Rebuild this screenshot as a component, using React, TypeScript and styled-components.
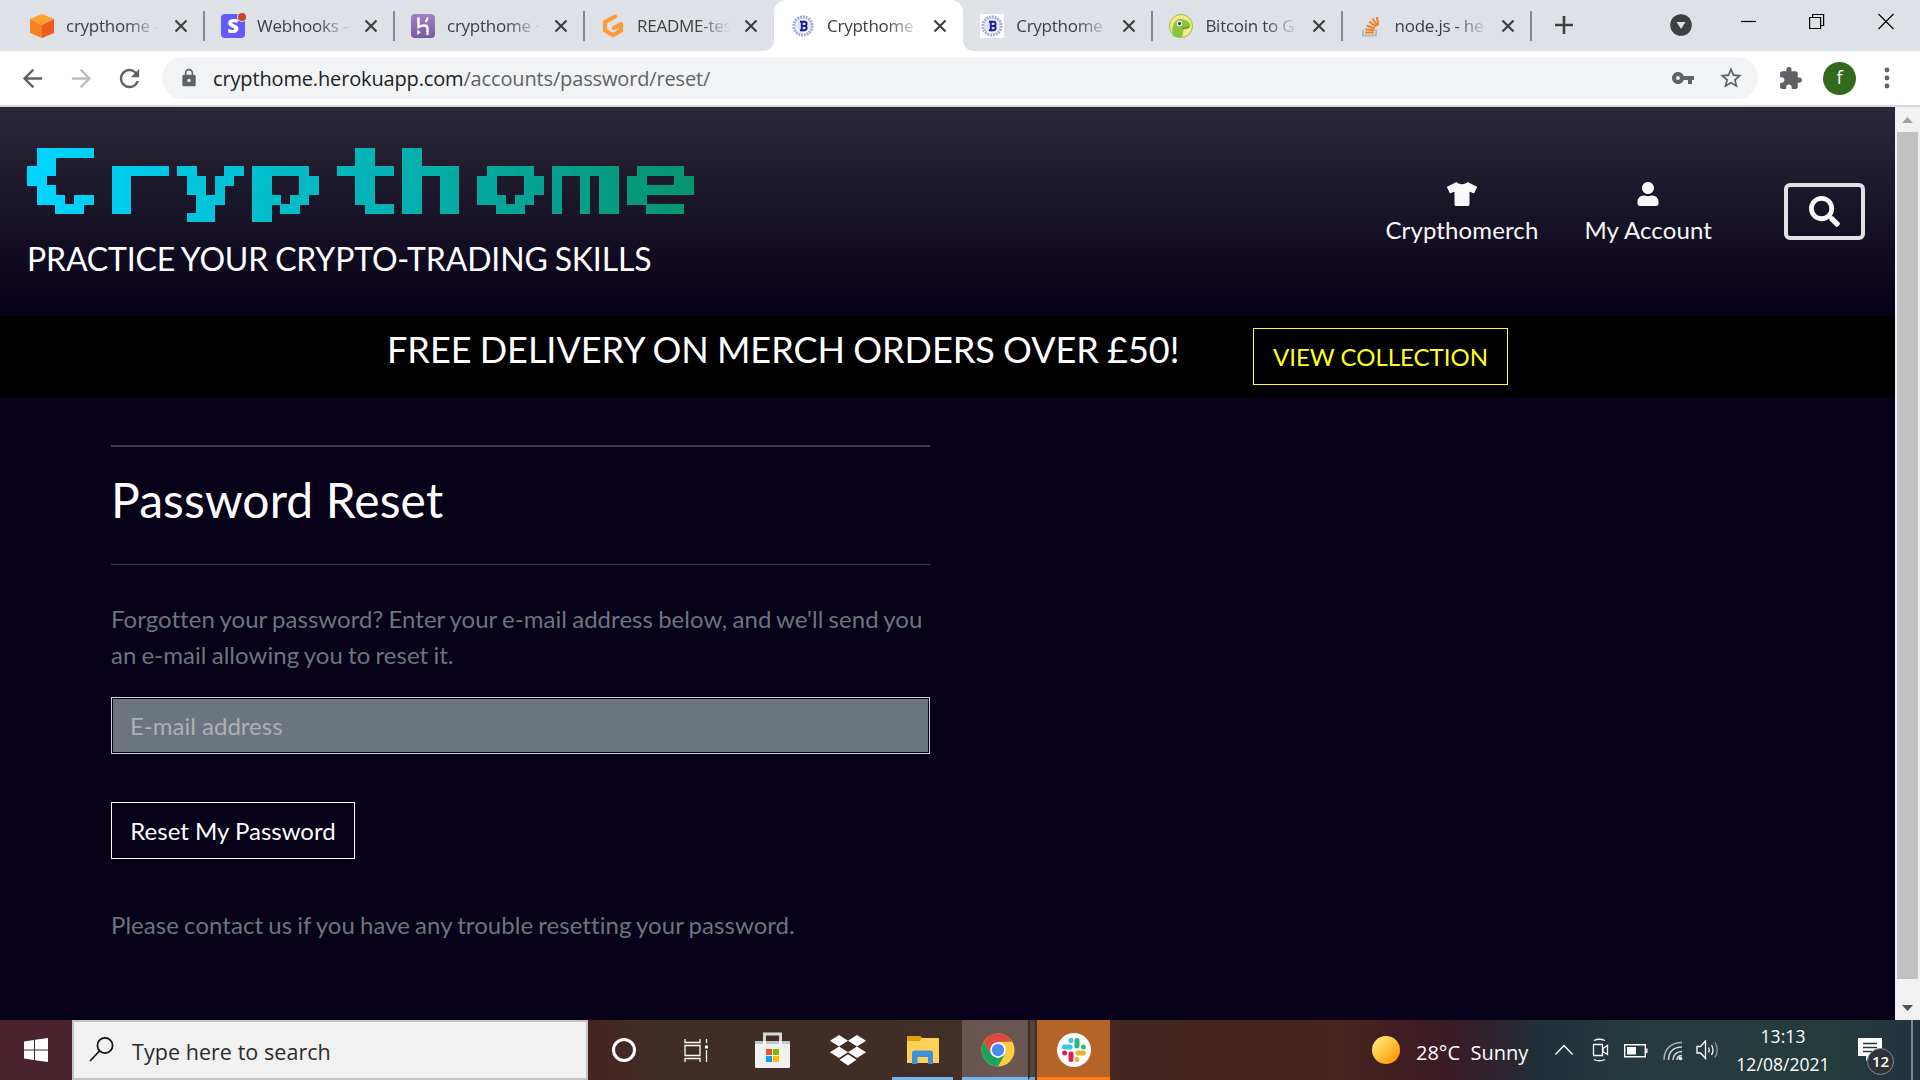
import React from "react";
import styled, { createGlobalStyle } from "styled-components";
import { FaTshirt, FaUser, FaSearch } from "react-icons/fa";
import { MdLock, MdVpnKey, MdStarBorder, MdExtension, MdArrowBack, MdArrowForward, MdRefresh } from "react-icons/md";

const uiFont = `"Open Sans", "Noto Sans", sans-serif`;

const GlobalStyle = createGlobalStyle`
  * { box-sizing: border-box; }
  body { margin: 0; overflow: hidden; background: #060018; }
  svg { display: block; flex: none; }
  h1, h2, h3, p { margin: 0; font-weight: 400; }
`;

const Screen = styled.div`
  width: 1920px;
  height: 1080px;
  display: flex;
  flex-direction: column;
  font-family: ${uiFont};
  overflow: hidden;
`;

/* ---------- browser tabs ---------- */
const TabStrip = styled.div`
  height: 51px;
  flex: none;
  display: flex;
  padding-left: 13px;
  background: #dee1e6;
`;

const Tab = styled.div<{ $width: number; $active?: boolean; $line?: boolean }>`
  position: relative;
  width: ${(p) => p.$width}px;
  flex: none;
  display: flex;
  align-items: center;
  padding: 1px 16px 0 17px;
  background: ${(p) => (p.$active ? "#fff" : "transparent")};
  border-radius: ${(p) => (p.$active ? "12px 12px 0 0" : "0")};
  &::after {
    content: "";
    display: ${(p) => (p.$line ? "block" : "none")};
    position: absolute;
    right: -1px;
    top: 11px;
    width: 2px;
    height: 30px;
    background: #87898d;
  }
`;

const TabFoot = styled.span<{ $side: "left" | "right" }>`
  position: absolute;
  bottom: 0;
  ${(p) => p.$side}: -10px;
  width: 10px;
  height: 10px;
  background: radial-gradient(circle at ${(p) => (p.$side === "left" ? "0 0" : "100% 0")}, transparent 9.5px, #fff 10px);
`;

const TabTitle = styled.span`
  width: 96px;
  margin-left: 12px;
  overflow: hidden;
  white-space: nowrap;
  font-size: 17px;
  line-height: 26px;
  letter-spacing: -0.25px;
  color: #3c4043;
  mask-image: linear-gradient(90deg, #000 62%, transparent 98%);
`;

const TabClose = styled.svg`
  width: 14px;
  height: 14px;
  margin-left: auto;
`;

const StripTools = styled.div`
  flex: 1;
  display: flex;
  align-items: flex-start;
`;

const NewTab = styled.svg`
  margin: 16px 0 0 24px;
`;
const TabSearch = styled.svg`
  margin: 14px 0 0 97px;
`;
const WindowButtons = styled.div`
  display: flex;
  gap: 53px;
  margin: 13px 0 0 49px;
`;

/* ---------- toolbar ---------- */
const Toolbar = styled.div`
  height: 56px;
  flex: none;
  display: flex;
  align-items: center;
  background: #fff;
  border-bottom: 2px solid #d9d9dc;
  color: #5f6368;
`;

const NavButtons = styled.div`
  display: flex;
  gap: 20px;
  width: 162px;
  padding-left: 18px;
  svg { width: 29px; height: 29px; }
  svg:nth-child(2) { color: #bbbdbf; }
  svg:nth-child(3) { margin-left: -1px; }
`;

const Omnibox = styled.div`
  width: 1596px;
  height: 42px;
  display: flex;
  align-items: center;
  border-radius: 21px;
  background: #f1f3f4;
  padding: 0 14px 0 17px;
`;

const Url = styled.span`
  margin: 1px 0 0 14px;
  font-size: 20px;
  line-height: 30px;
  letter-spacing: -0.15px;
  color: #5f6368;
  b { font-weight: 400; color: #202124; }
`;

const OmniIcons = styled.div`
  display: flex;
  align-items: center;
  gap: 23px;
  margin-left: auto;
`;

const ToolbarEnd = styled.div`
  display: flex;
  align-items: center;
  padding-left: 20px;
`;

const Avatar = styled.span`
  width: 33px;
  height: 33px;
  border-radius: 50%;
  margin: 0 28px 0 20px;
  background: #33691e;
  color: #fff;
  font-size: 18px;
  line-height: 31px;
  text-align: center;
`;

/* ---------- page ---------- */
const Viewport = styled.div`
  height: 913px;
  flex: none;
  display: flex;
`;

const Page = styled.div`
  width: 1895px;
  background: #060018;
  color: #fff;
  font-family: Lato, sans-serif;
  font-size: 24px;
  line-height: 36px;
  font-variant-ligatures: none;
`;

const Header = styled.header`
  height: 209px;
  display: flex;
  justify-content: space-between;
  background: linear-gradient(#2b2838, #060018);
`;

const Brand = styled.div`
  padding: 31px 0 0 27px;
`;

const LogoBox = styled.div`
  width: 712px;
  height: 94px;
  filter: url(#logo-pixels);
`;

const LogoText = styled.h1`
  width: 494px;
  height: 94px;
  margin-left: -6px;
  text-indent: -0.3px;
  font-family: "DejaVu Sans Mono", monospace;
  font-weight: 700;
  font-size: 83.33px;
  line-height: 88px;
  white-space: nowrap;
  transform: scaleX(1.495);
  transform-origin: 0 0;
  background: linear-gradient(90deg, #00d4ff 3%, #079068 95%);
  background-clip: text;
  -webkit-background-clip: text;
  color: transparent;
`;

const Kern = styled.span<{ $by: number }>`
  letter-spacing: ${(p) => p.$by}px;
`;

const Initial = styled(Kern)`
  font-size: 88px;
  line-height: 0;
`;

const Tagline = styled.h2`
  margin-top: 7px;
  font-size: 32px;
  line-height: 40px;
  letter-spacing: -0.17px;
  word-spacing: -1px;
  white-space: nowrap;
`;

const HeaderNav = styled.nav`
  display: flex;
  align-items: flex-start;
  padding: 75px 30px 0 0;
`;

const NavItem = styled.a<{ $gap: number }>`
  display: flex;
  flex-direction: column;
  align-items: center;
  margin-right: ${(p) => p.$gap}px;
  line-height: 36px;
  letter-spacing: 0.12px;
  color: #f8f9fa;
  svg { margin-bottom: 6px; }
`;

const ShirtIcon = styled(FaTshirt)`
  width: 30px;
  height: 24px;
`;

const SearchButton = styled.button`
  width: 81px;
  height: 57px;
  margin-top: 1px;
  display: flex;
  align-items: center;
  justify-content: center;
  padding: 0;
  border: 4px solid #e0e0e5;
  border-radius: 6px;
  background: transparent;
  color: #f8f9fa;
`;

const Banner = styled.section`
  height: 81px;
  display: flex;
  align-items: flex-start;
  padding: 12px 0 0 387px;
  background: #000;
`;

const BannerText = styled.h3`
  width: 866px;
  font-size: 36px;
  line-height: 43px;
  word-spacing: -1px;
  white-space: nowrap;
`;

const OutlineButton = styled.button<{ $color: string; $width: number }>`
  width: ${(p) => p.$width}px;
  height: 57px;
  padding: 0;
  border: 1px solid ${(p) => p.$color};
  background: transparent;
  color: ${(p) => p.$color};
  font: 400 24px/36px Lato, sans-serif;
  white-space: nowrap;
`;

const Content = styled.main`
  width: 930px;
  padding: 48px 0 0 111px;
`;

const Rule = styled.hr<{ $size: number }>`
  margin: 0;
  border: 0;
  height: ${(p) => p.$size}px;
  background: #403b4f;
`;

const Title = styled.h2`
  height: 117px;
  padding-top: 24px;
  font-size: 48px;
  line-height: 58px;
  letter-spacing: 0.1px;
`;

const Muted = styled.p<{ $top: number }>`
  margin-top: ${(p) => p.$top}px;
  color: #6c757d;
  letter-spacing: 0.04px;
  word-spacing: -1px;
`;

const EmailInput = styled.input`
  display: block;
  width: 819px;
  height: 57px;
  margin: 24px 0 48px;
  padding: 0 18px;
  border: 1px solid #d8d0e8;
  box-shadow: inset 0 0 0 1px #060018;
  border-radius: 0;
  background: #6c757d;
  font: 400 24px/36px Lato, sans-serif;
  &::placeholder { color: #adb0b4; opacity: 1; }
`;

const Scrollbar = styled.div`
  width: 25px;
  display: flex;
  flex-direction: column;
  align-items: center;
  justify-content: space-between;
  background: #f1f1f1;
`;

const ScrollArrow = styled.svg`
  width: 25px;
  height: 25px;
`;

const Thumb = styled.div`
  width: 21px;
  height: 847px;
  margin-bottom: auto;
  background: #c1c1c1;
`;

/* ---------- taskbar ---------- */
const Taskbar = styled.footer`
  height: 60px;
  flex: none;
  display: flex;
  background: linear-gradient(90deg, #4b232f 0, #4b232f 72px, #46241f 588px, #402d25 650px, #402e26 900px, #45302a 1030px, #43261f 1130px, #46261f 1345px, #421e20 1390px, #3a1b26 1450px, #2a2630 1510px, #1f323a 1545px, #263b3e 1650px, #243b3b 1840px, #22323f 1920px);
  color: #fff;
`;

const StartButton = styled.div`
  width: 72px;
  padding: 18px 0 0 24px;
`;

const SearchBox = styled.div`
  width: 516px;
  display: flex;
  align-items: center;
  border: 2px solid #c3c3c3;
  background: #f1f1f1;
  color: #2b2b2b;
  font-size: 21.5px;
  letter-spacing: 0.05px;
  padding: 2px 0 0 15px;
  gap: 18px;
  svg { margin-top: -4px; }
`;

const Task = styled.div<{ $width: number; $bg?: string }>`
  width: ${(p) => p.$width}px;
  display: flex;
  flex-direction: column;
  align-items: center;
  justify-content: center;
  position: relative;
  background: ${(p) => p.$bg ?? "transparent"};
`;

const TaskLine = styled.span<{ $color: string; $inset: number }>`
  position: absolute;
  bottom: 0;
  left: ${(p) => p.$inset}px;
  right: ${(p) => p.$inset}px;
  height: 3px;
  background: ${(p) => p.$color};
`;

const StackEdge = styled.div`
  width: 7px;
  margin-right: 2px;
  border-left: 2px solid #3b2d29;
  border-bottom: 3px solid #6ea6d8;
  background: #54443f;
`;

const ChromeIcon = styled.svg`
  margin-left: 6px;
`;

const Tray = styled.div`
  flex: 1;
  display: flex;
  align-items: center;
  padding-left: 262px;
`;

const Weather = styled.div`
  display: flex;
  align-items: center;
  width: 183px;
  font-size: 20px;
  white-space: pre;
  span { margin: 4px 0 0 16px; }
`;

const TrayIcons = styled.div`
  display: flex;
  align-items: center;
  gap: 16px;
`;

const TrayIcon = styled.svg<{ $left?: number; $top?: number }>`
  margin-left: ${(p) => p.$left ?? 0}px;
  margin-top: ${(p) => p.$top ?? 0}px;
`;

const Clock = styled.div`
  width: 96px;
  margin-left: 15px;
  text-align: center;
  font-size: 17.5px;
  line-height: 28px;
  letter-spacing: 0.05px;
  white-space: nowrap;
`;

const Notifications = styled.div`
  position: relative;
  width: 55px;
  height: 60px;
  margin-left: 27px;
  padding-top: 18px;
  border-right: 2px solid #7b8889;
`;

const Count = styled.span`
  position: absolute;
  left: 9px;
  top: 28px;
  width: 27px;
  height: 27px;
  border: 1px solid #84898c;
  border-radius: 50%;
  background: #2f3337;
  font-size: 15px;
  font-weight: 600;
  line-height: 24px;
  text-align: center;
`;

/* ---------- favicons ---------- */
const Cube = () => (
  <svg width="24" height="24" viewBox="0 0 24 24">
    <path fill="#ff9f2e" d="M12 0l12 5-12 6L0 5z" />
    <path fill="#f5811f" d="M0 5l12 6v13L0 19z" />
    <path fill="#ea5f20" d="M24 5l-12 6v13l12-5z" />
  </svg>
);

const Letter = styled.span<{ $bg: string }>`
  position: relative;
  width: 24px;
  height: 24px;
  flex: none;
  border-radius: 4px;
  background: ${(p) => p.$bg};
  color: #fff;
  font: 800 20px/23px "Open Sans", sans-serif;
  text-align: center;
`;

const Dot = styled.i`
  position: absolute;
  top: -1px;
  right: -1px;
  width: 8px;
  height: 8px;
  border-radius: 50%;
  background: #c9452d;
  box-shadow: 0 0 0 1px #dee1e6;
`;

const HerokuMark = () => (
  <Letter $bg="linear-gradient(#a183c4, #79589f)">
    <svg width="24" height="24" viewBox="0 0 24 24" fill="none" stroke="#fff" strokeWidth="2.400">
      <path d="M7.500 3.500v9.500c3-1.600 9-3 9 1.500v6.500M16.500 3.500c0 2-1 3.500-2 4.500" />
      <path fill="#fff" stroke="none" d="M6.300 15.500l3.500 2.700L6.300 21z" />
    </svg>
  </Letter>
);

const GitpodMark = () => (
  <svg width="24" height="24" viewBox="0 0 24 24" fill="none" stroke="#ff9a33" strokeWidth="4.200" strokeLinejoin="round" strokeLinecap="round">
    <path d="M14 2.500L4 8v8.500l8 4.700 8-4.700v-6.500l-7 4" />
  </svg>
);

const CoinBox = styled.span<{ $plate?: boolean }>`
  width: 24px;
  height: 24px;
  flex: none;
  background: ${(p) => (p.$plate ? "#fff" : "transparent")};
`;

const Coin = ({ plate }: { plate?: boolean }) => (
  <CoinBox $plate={plate}>
    <svg width="24" height="24" viewBox="0 0 24 24" fill="none">
      <circle cx="12" cy="12" r="9" stroke="#a9a9dc" strokeWidth="3.200" strokeDasharray="2 .8" />
      <circle cx="12" cy="12" r="6.500" fill="#d9e6f6" />
      <path d="M9 7.800h4.500a2 2 0 0 1 0 4.200h-3M10.500 12h3a2 2 0 0 1 0 4.200H9M10.800 7.800v8.400" stroke="#1c1c96" strokeWidth="1.900" />
    </svg>
  </CoinBox>
);

const Gecko = () => (
  <svg width="24" height="24" viewBox="0 0 24 24">
    <circle cx="12" cy="12" r="11.500" fill="#f9e988" stroke="#8dc63f" />
    <path fill="#8bc53f" d="M4 22C2 12 5 6 11 5c5 0 11 3 10.500 7-1 3-4 3-7 3.500L13 23.500c-4 0-7-.5-9-1.500z" />
    <circle cx="10.500" cy="9.500" r="2.700" fill="#fff" />
    <circle cx="10.500" cy="9.500" r="1.700" fill="#3c4a4f" />
    <path d="M13 14c3 .5 5-.3 7-1.500" stroke="#4d7a27" fill="none" />
  </svg>
);

const StackMark = () => (
  <svg width="24" height="24" viewBox="0 0 24 24" fill="none" strokeWidth="2">
    <path stroke="#b5b9bd" d="M4 15.500v6h13v-6" />
    <path stroke="#f48024" d="M6 18.500h9M6.300 15.300l8.800 1M7.500 11.500l8.200 3M10 7.500l7 5M13.500 4.500l5 7.500M17.800 3l1.500 8" />
  </svg>
);

interface TabInfo {
  title: string;
  icon: React.ReactNode;
  width: number;
  active?: boolean;
  line?: boolean;
}

const tabs: TabInfo[] = [
  { title: "crypthome -", icon: <Cube />, width: 191, line: true },
  { title: "Webhooks –", icon: <Letter $bg="#635bff">S<Dot /></Letter>, width: 190, line: true },
  { title: "crypthome ·", icon: <HerokuMark />, width: 190, line: true },
  { title: "README-tes", icon: <GitpodMark />, width: 190 },
  { title: "Crypthome", icon: <Coin />, width: 189.2, active: true },
  { title: "Crypthome", icon: <Coin plate />, width: 189.2, line: true },
  { title: "Bitcoin to G", icon: <Gecko />, width: 189.2, line: true },
  { title: "node.js - he", icon: <StackMark />, width: 189.2, line: true },
];

const Tabs = () => (
  <TabStrip>
    {tabs.map((t, i) => (
      <Tab key={i} $width={t.width} $active={t.active} $line={t.line}>
        {t.active && <TabFoot $side="left" />}
        {t.active && <TabFoot $side="right" />}
        {t.icon}
        <TabTitle>{t.title}</TabTitle>
        <TabClose viewBox="0 0 14 14" stroke="#3c4043" strokeWidth="2.200">
          <path d="M1.500 1.500l11 11M12.500 1.500l-11 11" />
        </TabClose>
      </Tab>
    ))}
    <StripTools>
      <NewTab width="18" height="18" viewBox="0 0 18 18" stroke="#3c4043" strokeWidth="2.600">
        <path d="M9 0v18M0 9h18" />
      </NewTab>
      <TabSearch width="22" height="22" viewBox="0 0 22 22">
        <circle cx="11" cy="11" r="10.800" fill="#3c4043" />
        <path d="M6.500 8h9L11 15z" fill="#dee1e6" />
      </TabSearch>
      <WindowButtons>
        <svg width="15" height="18" stroke="#000" strokeWidth="1.200"><path d="M0 8.500h15" /></svg>
        <svg width="16" height="18" fill="none" stroke="#000" strokeWidth="1.200">
          <path d="M.6 4.500h11v11H.6zM3.600 4.500v-3h11v11h-3" />
        </svg>
        <svg width="16" height="18" stroke="#000" strokeWidth="1.100"><path d="M.5 1l15 15M15.500 1l-15 15" /></svg>
      </WindowButtons>
    </StripTools>
  </TabStrip>
);

const AddressBar = () => (
  <Toolbar>
    <NavButtons>
      <MdArrowBack />
      <MdArrowForward />
      <MdRefresh />
    </NavButtons>
    <Omnibox>
      <MdLock size={20} />
      <Url><b>crypthome.herokuapp.com</b>/accounts/password/reset/</Url>
      <OmniIcons>
        <MdVpnKey size={24} />
        <MdStarBorder size={26} />
      </OmniIcons>
    </Omnibox>
    <ToolbarEnd>
      <MdExtension size={25} />
      <Avatar>f</Avatar>
      <svg width="6" height="22" fill="#5f6368">
        <circle cx="3" cy="3" r="2.400" /><circle cx="3" cy="11" r="2.400" /><circle cx="3" cy="19" r="2.400" />
      </svg>
    </ToolbarEnd>
  </Toolbar>
);

const FilterDefs = styled.svg`
  position: absolute;
`;

/* Sample positions inside a 75px tile: eight cells of 9.375px, on whole pixels. */
const samples = [4, 14, 23, 32, 42, 51, 61, 70];

/* Samples the wordmark once per cell and grows each sample to fill its cell. */
const PixelFilter = () => (
  <FilterDefs width="0" height="0">
    <filter id="logo-pixels" filterUnits="userSpaceOnUse" x="0" y="0" width="712" height="84" colorInterpolationFilters="sRGB">
      {samples.map((p) => <feFlood key={p} x={p} y={0} width={1} height={75} floodColor="#000" result={`col${p}`} />)}
      <feMerge x="0" y="0" width="75" height="75" result="cols">
        {samples.map((p) => <feMergeNode key={p} in={`col${p}`} />)}
      </feMerge>
      {samples.map((p) => <feFlood key={p} x={0} y={p} width={75} height={1} floodColor="#000" result={`row${p}`} />)}
      <feMerge x="0" y="0" width="75" height="75" result="rows">
        {samples.map((p) => <feMergeNode key={p} in={`row${p}`} />)}
      </feMerge>
      <feComposite in="cols" in2="rows" operator="in" x="0" y="0" width="75" height="75" />
      <feTile result="grid" />
      <feComposite in="SourceGraphic" in2="grid" operator="in" />
      <feComponentTransfer>
        <feFuncA type="discrete" tableValues="0 1" />
      </feComponentTransfer>
      <feMorphology operator="dilate" radius="4" result="cells" />
      <feOffset in="cells" dx="1" dy="0" result="right" />
      <feOffset in="cells" dx="0" dy="1" result="down" />
      <feOffset in="cells" dx="1" dy="1" result="corner" />
      <feMerge>
        <feMergeNode in="corner" />
        <feMergeNode in="down" />
        <feMergeNode in="right" />
        <feMergeNode in="cells" />
      </feMerge>
    </filter>
  </FilterDefs>
);

const SitePage = () => (
  <Page>
    <PixelFilter />
    <Header>
      <Brand>
        <LogoBox>
          <LogoText><Initial $by={-2.5}>C</Initial>ry<Kern $by={6.3}>p</Kern><Kern $by={-6.3}>t</Kern>home</LogoText>
        </LogoBox>
        <Tagline>PRACTICE YOUR CRYPTO-TRADING SKILLS</Tagline>
      </Brand>
      <HeaderNav>
        <NavItem $gap={46}><ShirtIcon />Crypthomerch</NavItem>
        <NavItem $gap={72}><FaUser size={24} />My Account</NavItem>
        <SearchButton><FaSearch size={31} /></SearchButton>
      </HeaderNav>
    </Header>
    <Banner>
      <BannerText>FREE DELIVERY ON MERCH ORDERS OVER £50!</BannerText>
      <OutlineButton $color="#ffff1a" $width={255}>VIEW COLLECTION</OutlineButton>
    </Banner>
    <Content>
      <Rule $size={2} />
      <Title>Password Reset</Title>
      <Rule $size={1} />
      <Muted $top={36}>
        Forgotten your password? Enter your e-mail address below, and we'll send you an e-mail allowing you to reset it.
      </Muted>
      <EmailInput placeholder="E-mail address" />
      <OutlineButton $color="#ffffff" $width={244}>Reset My Password</OutlineButton>
      <Muted $top={48}>Please contact us if you have any trouble resetting your password.</Muted>
    </Content>
  </Page>
);

const TaskbarView = () => (
  <Taskbar>
    <StartButton>
      <svg width="24" height="24" viewBox="0 0 24 24" fill="#fff">
        <path d="M0 3.400l10-1.400v9.400H0zM11 1.800L24 0v11.400H11zM0 12.500h10V22L0 20.600zM11 12.500h13V24l-13-1.800z" />
      </svg>
    </StartButton>
    <SearchBox>
      <svg width="25" height="25" viewBox="0 0 25 25" fill="none" stroke="#111" strokeWidth="1.700">
        <circle cx="16" cy="8.500" r="7.600" /><path d="M10.500 14L1 24" />
      </svg>
      Type here to search
    </SearchBox>
    <Task $width={72}>
      <svg width="26" height="26"><circle cx="13" cy="13" r="10.500" fill="none" stroke="#fff" strokeWidth="3" /></svg>
    </Task>
    <Task $width={72}>
      <svg width="25" height="25" fill="none" stroke="#fff" strokeWidth="1.300">
        <path d="M1 1v3.500h15V1M1 7.500h15v10H1zM1 24v-3.500h15V24M22.500 1v4M22.500 12v12" />
        <path d="M21 7.500h3v3h-3z" fill="#fff" stroke="none" />
      </svg>
    </Task>
    <Task $width={81}>
      <svg width="35" height="37" viewBox="0 0 35 37">
        <path d="M9.500 12V2h16v10" fill="none" stroke="#d5d8d9" strokeWidth="3" />
        <path d="M0 9h35v25.500q0 1.500-1.500 1.500h-32Q0 36 0 34.500z" fill="#f1f1f1" />
        <path d="M0 9h35v3H0z" fill="#c4c8ca" />
        <path d="M8 9h3v3H8zM24 9h3v3h-3z" fill="#fff" />
        <path d="M11 17h6v6h-6z" fill="#f25022" /><path d="M18 17h6v6h-6z" fill="#7fba00" />
        <path d="M11 24h6v6h-6z" fill="#00a4ef" /><path d="M18 24h6v6h-6z" fill="#ffb900" />
      </svg>
    </Task>
    <Task $width={70}>
      <svg width="36" height="31" viewBox="0 0 36 31" fill="#fff">
        <path d="M9 0l9 5.700-9 5.700-9-5.700zM27 0l9 5.700-9 5.700-9-5.700zM9 11.500l9 5.700-9 5.700-9-5.700zM27 11.500l9 5.700-9 5.700-9-5.700zM18 19.300l8.500 5.400L18 30.500l-8.500-5.800z" />
      </svg>
    </Task>
    <Task $width={79}>
      <svg width="32" height="28" viewBox="0 0 32 28">
        <path d="M0 1q0-1 1-1h12l2 2h16q1 0 1 1v24H0z" fill="#ffd057" />
        <path d="M0 5V1q0-1 1-1h12l2 2-2 3z" fill="#e2a100" />
        <path d="M5 28V17q0-2.500 2.500-2.500h16Q26 14.500 26 17v11h-5v-7H10.500v7z" fill="#3d93d9" />
      </svg>
      <TaskLine $color="#75b6ec" $inset={9} />
    </Task>
    <Task $width={66} $bg="linear-gradient(90deg,#69554f,#6b5751)">
      <ChromeIcon width="34" height="34" viewBox="0 0 34 34">
        <circle cx="17" cy="17" r="16.500" fill="#ffcd40" />
        <path d="M2.700 8.800A16.500 16.500 0 0 1 31.300 8.800H17L9.900 21.100z" fill="#dc4a3d" />
        <path d="M2.700 8.800l7.200 12.300L17 25.200 15.500 33.500A16.500 16.500 0 0 1 2.700 8.800z" fill="#1aa35b" />
        <path d="M24.100 21.100L17 33.500h-1.500L17 25.200z" fill="#1aa35b" />
        <circle cx="17" cy="17" r="7.800" fill="#fff" /><circle cx="17" cy="17" r="6.200" fill="#4c8bf5" />
      </ChromeIcon>
      <TaskLine $color="#75b6ec" $inset={0} />
    </Task>
    <StackEdge />
    <Task $width={73} $bg="#b46427">
      <svg width="34" height="34" viewBox="0 0 34 34" strokeWidth="5" strokeLinecap="round">
        <circle cx="17" cy="17" r="17" fill="#fff" />
        <path stroke="#36c5f0" d="M7.500 14h5.500M14 7.600h.01" />
        <path stroke="#2eb67d" d="M20 7.500v5.500M26.400 14h.01" />
        <path stroke="#ecb22e" d="M21 20h5.500M20 26.400h.01" />
        <path stroke="#e01e5a" d="M14 21v5.500M7.600 20h.01" />
      </svg>
      <TaskLine $color="#ff7a0f" $inset={0} />
    </Task>
    <Tray>
      <Weather>
        <svg width="28" height="28">
          <defs><linearGradient id="sun" x1="0" y1="0" x2="1" y2="1"><stop offset=".2" stopColor="#ffe06a" /><stop offset=".85" stopColor="#ff9d0a" /></linearGradient></defs>
          <circle cx="14" cy="14" r="14" fill="url(#sun)" />
        </svg>
        <span>28°C  Sunny</span>
      </Weather>
      <TrayIcons>
        <TrayIcon width="18" height="12" fill="none" stroke="#fff" strokeWidth="1.400"><path d="M.5 10.500L9 1.500l8.500 9" /></TrayIcon>
        <TrayIcon width="20" height="24" fill="none" stroke="#fff" strokeWidth="1.300" $left={2}>
          <path d="M3 2.500q5-2.500 11 0M3 21.500q5 2.500 11 0M2.500 6.500h9v11h-9zM12 10.500l4.500-3v9l-4.500-3z" />
        </TrayIcon>
        <TrayIcon width="24" height="14" fill="none" stroke="#fff" strokeWidth="1.400" $left={-3} $top={2}>
          <path d="M.7.700h20.600v12H.7zM22.800 4.500v4.500" /><path d="M3 3h9v7.500H3z" fill="#fff" stroke="none" />
        </TrayIcon>
        <TrayIcon width="20" height="20" fill="none" stroke="#d5dada" strokeWidth="1.500" $left={-1} $top={2}>
          <path d="M1 19C1 8 8 1.500 19 1.500" opacity=".75" /><path d="M5.500 19c0-8 5-13 13.500-13M10 19c0-5 3.500-8.500 9-8.500M14 19c0-3 2-4.500 5-4.500" />
          <circle cx="17.500" cy="17.500" r="1.800" fill="#fff" stroke="none" />
        </TrayIcon>
        <TrayIcon width="24" height="20" fill="none" stroke="#fff" strokeWidth="1.300" $left={-3}>
          <path d="M1 6.500h3.500L9.500 1v17.500L4.500 13H1z" /><path d="M12.500 7.500q1.500 2.500 0 5M15.500 5q3 5 0 10" /><path d="M19 2.500q4.500 7 0 15" opacity=".5" />
        </TrayIcon>
      </TrayIcons>
      <Clock>13:13<br />12/08/2021</Clock>
      <Notifications>
        <svg width="24" height="24"><path d="M0 0h24v18H13l-5 5v-5H0z" fill="#fff" /><path d="M5 5.500h14M5 9.500h14M5 13.500h9" stroke="#26343a" strokeWidth="1.300" /></svg>
        <Count>12</Count>
      </Notifications>
    </Tray>
  </Taskbar>
);

export default function App() {
  return (
    <Screen>
      <GlobalStyle />
      <Tabs />
      <AddressBar />
      <Viewport>
        <SitePage />
        <Scrollbar>
          <ScrollArrow viewBox="0 0 25 25"><path d="M7 16h11l-5.500-6z" fill="#a3a3a3" /></ScrollArrow>
          <Thumb />
          <ScrollArrow viewBox="0 0 25 25"><path d="M7 10h11l-5.500 6z" fill="#505050" /></ScrollArrow>
        </Scrollbar>
      </Viewport>
      <TaskbarView />
    </Screen>
  );
}
